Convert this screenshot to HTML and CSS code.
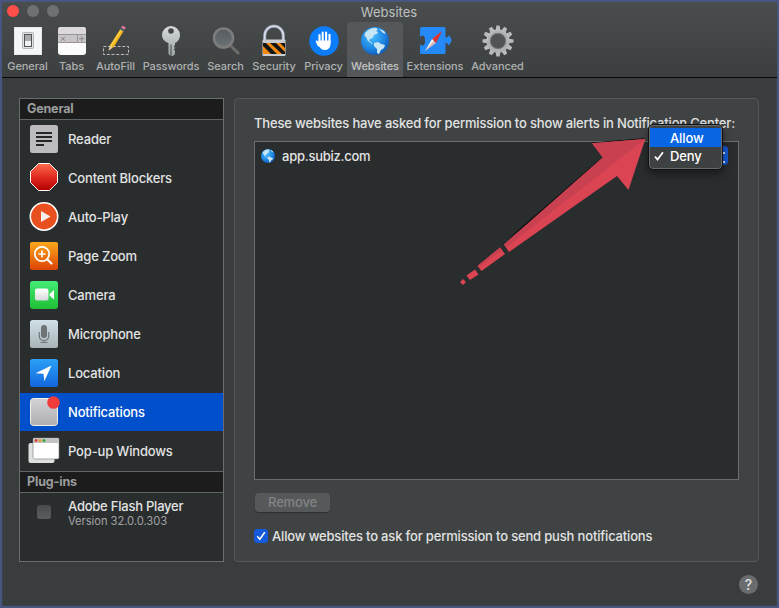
FILE: index.html
```html
<!DOCTYPE html>
<html lang="en">
<head>
<meta charset="utf-8">
<title>Websites</title>
<link rel="stylesheet" href="styles.css">
</head>
<body>
<svg class="defs" width="0" height="0" aria-hidden="true">
  <defs>
    <linearGradient id="silver" x2="0" y2="1"><stop stop-color="#d6dadc"/><stop offset="1" stop-color="#9da2a5"/></linearGradient>
    <linearGradient id="white" x2="0" y2="1"><stop stop-color="#fff"/><stop offset="1" stop-color="#d9dadb"/></linearGradient>
    <linearGradient id="blue" x2="0" y2="1"><stop stop-color="#2ca0f8"/><stop offset="1" stop-color="#1266dc"/></linearGradient>
    <linearGradient id="red" x2="0" y2="1"><stop stop-color="#ff6c50"/><stop offset=".5" stop-color="#e02c20"/><stop offset="1" stop-color="#b20000"/></linearGradient>
    <linearGradient id="orange" x2="0" y2="1"><stop stop-color="#fba91c"/><stop offset="1" stop-color="#dc4404"/></linearGradient>
    <linearGradient id="green" x2="0" y2="1"><stop stop-color="#43ec76"/><stop offset="1" stop-color="#1fbf35"/></linearGradient>
    <linearGradient id="mic" x2="0" y2="1"><stop stop-color="#cfe0e7"/><stop offset="1" stop-color="#a9b4b8"/></linearGradient>
    <linearGradient id="gray" x2="0" y2="1"><stop stop-color="#d4d4d6"/><stop offset="1" stop-color="#aeaeb0"/></linearGradient>
    <linearGradient id="lens" x2="0" y2="1"><stop stop-color="#555b5d"/><stop offset="1" stop-color="#6c7376"/></linearGradient>
    <radialGradient id="ocean" cx=".4" cy=".35" r=".75"><stop stop-color="#48bcff"/><stop offset=".6" stop-color="#1c84e0"/><stop offset="1" stop-color="#0b4ca8"/></radialGradient>
    <symbol id="globe" viewBox="0 0 28 28">
      <circle cx="14" cy="14" r="14" fill="url(#ocean)"/>
      <path fill="#c6e6f6" d="M6 4Q10 .6 15 .7L17 2.500 15 4 17 5 16 7 13 8 11.500 11 9 12 8 14 10 15 12 17 10.500 16.500 7 14 5 10 3.500 9 4 6ZM18 1.500 23 4 25 7 22 6 20 4ZM13 16 17 15 20 17 24 18 23 21 20 23 18 27 16 26 16 22 13 19Z"/>
    </symbol>
  </defs>
</svg>
<div class="window">
  <header class="header">
    <div class="titlebar">
      <div class="lights"><i class="light close"></i><i class="light"></i><i class="light"></i></div>
      <h1>Websites</h1>
    </div>
    <nav class="toolbar">
      <a class="tool general"><svg viewBox="0 0 30 30"><rect x="1" y="1" width="28" height="28" fill="#e6e8ea"/><rect x="2" y="2" width="26" height="26" fill="#f5f6f7"/><rect x="9.500" y="6.500" width="11" height="16" rx="1" fill="#e0e2e3" stroke="#b4b7b8"/><rect x="11.500" y="8.500" width="7" height="12" fill="#a8acae" stroke="#505456"/><path d="M12 15h6v5h-6z" fill="#f0f1f2"/></svg><span>General</span></a>
      <a class="tool tabs"><svg viewBox="0 0 30 30"><rect x="1" y="1" width="28" height="28" rx="3" fill="#fcfcfc"/><path d="M1 9V4a3 3 0 0 1 3-3h22a3 3 0 0 1 3 3v5z" fill="#dcd9dc"/><path d="M1 8.500h28v8H1z" fill="#c8c4c8"/><path d="M1 8.500h28M1 16.500h19.500v-8M20.500 16.500H29" fill="none" stroke="#989498"/><path d="m4 10.800 4 4m0-4-4 4M22 12.700h5.500m-2.700-2.700v5.500" stroke="#8b888e" stroke-width="1"/></svg><span>Tabs</span></a>
      <a class="tool autofill"><svg viewBox="0 0 30 30"><rect x="2.500" y="20.500" width="25" height="8" fill="none" stroke="#b9bcbd" stroke-dasharray="3 1.700"/><path d="m7 26 2-7 3 2z" fill="#e9c99a"/><path d="m7 26 .7-2.500 1.300.8z" fill="#333"/><path d="M8.800 19.500 19.500 2.800l3.300 2-10.500 17z" fill="#f8b81b"/><path d="m9.700 20.200 11-16.700" stroke="#ffe066" stroke-width="1"/><path d="m19 3.500 1.300-2 3.300 2-1.300 2z" fill="#4a6476"/><path d="m20.200 1.600 1.300-2 3.300 2-1.200 2z" fill="#e6739a"/></svg><span>AutoFill</span></a>
      <a class="tool passwords"><svg viewBox="0 0 30 30"><path fill="url(#silver)" fill-rule="evenodd" d="M15 0a9 9 0 0 1 9 9c0 4-2.300 7-5 8v2l-1.200 1.500L19 22l-1.200 1.600L19 25v3l-2 2h-1.500V18.500h-1V30l-2-2V17C8.500 15.500 6 13 6 9a9 9 0 0 1 9-9Zm0 2.200a2.800 2.800 0 1 0 0 5.600 2.800 2.800 0 0 0 0-5.600Z"/></svg><span>Passwords</span></a>
      <a class="tool search"><svg viewBox="0 0 30 30"><path d="m20 20 8 8" stroke="#6d6d6d" stroke-width="3"/><circle cx="12.500" cy="12" r="9.500" fill="url(#lens)" stroke="#7c7c7c" stroke-width="2.600"/></svg><span>Search</span></a>
      <a class="tool security"><svg viewBox="0 0 30 30"><path d="M5.700 14V9.500a9.300 9.300 0 0 1 18.600 0V14" fill="none" stroke="#8992a4" stroke-width="3.200"/><path d="M5.700 14V9.500a9.300 9.300 0 0 1 18.600 0V14" fill="none" stroke="#d5dbe9" stroke-width="1.800"/><rect x="3.500" y="13.500" width="23" height="16.500" rx="1" fill="#c9cdd2"/><path d="M4 17h22v11H4z" fill="#f58a12"/><path d="M4 17h3l11 11h-6L4 20zm7 0h6l9 9v2h-3zm10 0h5v5z" fill="#161616"/></svg><span>Security</span></a>
      <a class="tool privacy"><svg viewBox="0 0 30 30"><circle cx="15" cy="15" r="14.700" fill="#0b7dfb"/><path d="M10.500 17V9m3.200 7V6.500m3.400 9.500V6.500m3.400 10.500V8.800M9.800 19.500l-2-4" stroke="#fff" stroke-width="2.100" stroke-linecap="round"/><path d="M9.500 14.500h12V18c0 3.500-2.300 6-5.500 6-3 0-4.500-1.200-6.500-4.500z" fill="#fff"/></svg><span>Privacy</span></a>
      <a class="tool selected"><svg viewBox="0 0 30 30"><use href="#globe" x="1" y="1" width="28" height="28"/></svg><span>Websites</span></a>
      <a class="tool extensions"><svg class="wide" viewBox="0 0 32 30"><path d="M2.500 1H25q1.500 0 1.500 1.500V12q1-1 2-1 .3-1.500 1.300-1.500 1.200 0 1.200 1.700 1.500.3 1.500 3t-1.500 3q0 1.800-1.200 1.800-1 0-1.300-1.500-1 0-2-1v10q0 1.500-1.500 1.500H2.500Q1 28 1 26.500V18q1 1.500 2.500 1.500 2.500 0 2.500-5t-2.500-5Q2 9.500 1 11V2.500Q1 1 2.500 1Z" fill="#2589f8"/><path d="m23 5-6 12-4-4z" fill="#f1382e"/><path d="m6 25 7-12 4 4z" fill="#f6f6f6"/><path d="m6 25 17-20-6 12z" fill="#9e252a" opacity=".3"/></svg><span>Extensions</span></a>
      <a class="tool advanced"><svg class="wide" viewBox="-16 -15 32 30"><g fill="#b8babb"><path id="cog" d="M-1.600-15.500h3.200L2.600-10h-5.200zM-1.600 15.500h3.200L2.600 10h-5.200z"/><use href="#cog" transform="rotate(30)"/><use href="#cog" transform="rotate(60)"/><use href="#cog" transform="rotate(90)"/><use href="#cog" transform="rotate(120)"/><use href="#cog" transform="rotate(150)"/></g><circle r="9.500" fill="none" stroke="#aeb0b1" stroke-width="4"/><circle r="7.700" fill="#505455" stroke="#77797a"/><path d="M-11 0a11 11 0 0 1 22 0" fill="none" stroke="#c4c5c5"/></svg><span>Advanced</span></a>
    </nav>
  </header>
  <main class="content">
    <aside class="sidebar">
      <h2>General</h2>
      <ul>
        <li><svg viewBox="0 0 32 32"><rect x="2" y="2" width="28" height="28" rx="2.500" fill="#bcbcbe"/><path d="M8 10h16M8 14h16M8 18h16M8 22h8" stroke="#252727" stroke-width="2"/></svg><span>Reader</span></li>
        <li><svg viewBox="0 0 32 32"><path d="M10.500 1.500h11l8 8v11l-8 8h-11l-8-8v-11z" fill="url(#red)" stroke="#fff"/></svg><span>Content Blockers</span></li>
        <li><svg viewBox="0 0 32 32"><circle cx="16" cy="15.500" r="13.700" fill="#e9501f" stroke="#fff" stroke-width="1.600"/><path d="M13 10v11l9.500-5.500z" fill="#f4f1ef"/></svg><span>Auto-Play</span></li>
        <li><svg viewBox="0 0 32 32"><rect x="2" y="2" width="28" height="28" rx="2" fill="url(#orange)"/><circle cx="14" cy="14" r="7.200" fill="none" stroke="#fff" stroke-width="1.700"/><path d="M14 10.500v7M10.500 14h7" stroke="#fff" stroke-width="1.700"/><path d="m19.500 19.500 4 4" stroke="#fff" stroke-width="2.200" stroke-linecap="round"/></svg><span>Page Zoom</span></li>
        <li><svg viewBox="0 0 32 32"><rect x="2" y="2" width="28" height="28" rx="3" fill="url(#green)"/><rect x="7" y="9.500" width="13.500" height="12" rx="2" fill="url(#white)"/><path d="m21.500 15 4.500-4v9.500l-4.500-4z" fill="#fff"/></svg><span>Camera</span></li>
        <li><svg viewBox="0 0 32 32"><rect x="2" y="2" width="28" height="28" rx="2.500" fill="url(#mic)"/><rect x="13" y="7" width="6" height="13" rx="3" fill="#6f7476"/><path d="M11.300 14v4c0 6 9.400 6 9.400 0v-4M16 22.500V24m-3.500.5h7" fill="none" stroke="#73787b" stroke-width="1.200"/></svg><span>Microphone</span></li>
        <li><svg viewBox="0 0 32 32"><rect x="2" y="2" width="28" height="28" rx="2.500" fill="url(#blue)"/><path d="m23.500 8.500-16 7.800 8 .5.800 7.500z" fill="#fff"/></svg><span>Location</span></li>
        <li class="active"><svg viewBox="0 0 32 32"><rect x="2.500" y="2.500" width="27" height="27" rx="3" fill="url(#gray)" stroke="#f1efec"/><circle cx="25.500" cy="6.500" r="6.300" fill="#f13c3c"/></svg><span>Notifications</span></li>
        <li><svg viewBox="0 0 32 32"><rect x=".5" y="8" width="26" height="20" rx="2" fill="#dedfdf"/><rect x="5" y="3" width="26" height="21" rx="1.500" fill="#fff" stroke="#777" stroke-width=".6"/><path d="M5 8V4.500Q5 3 6.500 3h23Q31 3 31 4.500V8z" fill="#c3c4c4"/><circle cx="8" cy="5.500" r="1.500" fill="#dd443c"/><circle cx="12" cy="5.500" r="1.500" fill="#e4a032"/><circle cx="16" cy="5.500" r="1.500" fill="#3ba438"/></svg><span>Pop-up Windows</span></li>
      </ul>
      <h2 class="plug">Plug-ins</h2>
      <div class="plugin"><i class="box"></i><div><p>Adobe Flash Player</p><small>Version 32.0.0.303</small></div></div>
    </aside>
    <section class="panel">
      <p class="intro">These websites have asked for permission to show alerts in Notification Center:</p>
      <div class="list">
        <div class="site"><svg viewBox="0 0 28 28"><use href="#globe"/></svg><span>app.subiz.com</span></div>
        <div class="select"></div>
        <div class="menu">
          <div class="option highlighted"><i></i>Allow</div>
          <div class="option"><i><svg viewBox="0 0 10 10"><path d="m1 5.500 2.500 3L9 1.300" fill="none" stroke="#fff" stroke-width="1.800"/></svg></i>Deny</div>
        </div>
        <svg class="arrow" viewBox="455 130 200 165"><path fill="#111" d="m592 142.500 53-4.500-145 107 2.500-1.500 100-86.500z"/><path fill="#da4453" d="m592 143.300 53.300-4.300-16.800 51-11.500-14-108 76-5-7.500 98.800-87zM500 247.500l5 6.500-23.500 17-4-5zM475 269.500l3.500 5-8.500 5.500-3.500-4.500zM463 279l3 3-3 3-3-3z"/><path fill="#c94150" d="m592 143.300 53.300-4.300L506 247.500l-2-3 98.800-87zM500 247.500l2 2.500-23 17-1.500-1z"/></svg>
      </div>
      <button class="remove" disabled>Remove</button>
      <label class="permission"><span class="check"><svg viewBox="0 0 14 14"><path d="m3.300 7.300 2.500 3 5-7" fill="none" stroke="#fff" stroke-width="1.500"/></svg></span><span>Allow websites to ask for permission to send push notifications</span></label>
    </section>
  </main>
  <footer><button class="help">?</button></footer>
</div>
</body>
</html>
```
FILE: styles.css
```css
* { box-sizing: border-box; }
body {
  margin: 0;
  background: #47567f;
  color: #e2e3e3;
  font: 500 13px/16px Inter, "Liberation Sans", sans-serif;
  letter-spacing: -.17px;
}
h1, h2, p, ul { margin: 0; padding: 0; }
svg { display: block; overflow: visible; }
.defs { position: absolute; }
.window {
  width: 779px;
  height: 608px;
  overflow: hidden;
  border: 2px solid #47567f;
  background: #3a3d3e;
  box-shadow: inset 0 0 2px #44506a;
}
.header {
  height: 76px;
  border-bottom: 1px solid #050606;
  background: linear-gradient(#4a4d4e, #3c3f40);
}
.titlebar { display: grid; grid-template-columns: 80px 1fr 81px; height: 20px; }
.lights { display: flex; gap: 8px; padding: 3px 0 0 5px; }
.light { width: 12px; height: 12px; border-radius: 50%; background: #6e7071; }
.close { background: #ff4f4a; }
h1 { padding-top: 2px; text-align: center; font-size: 13px; font-weight: 400; line-height: 16px; color: #bec0c0; letter-spacing: 0; }
.toolbar { display: grid; grid-template-columns: 48px 41px 47px 64px 45px 52px 47px 56px 64px 61px; height: 55px; padding-left: 1px; }
.tool { display: flex; flex-direction: column; align-items: center; padding-top: 4px; color: #afb1b1; font-size: 11px; font-weight: 450; line-height: 14px; letter-spacing: -.08px; white-space: nowrap; }
.general { padding-left: 1px; }
.tool svg { width: 30px; height: 30px; margin-bottom: 3px; flex: none; }
.tool .wide { width: 32px; }
.selected { border-radius: 4px 4px 0 0; background: #55585a; color: #c3c5c5; }
.content { display: flex; gap: 10px; padding: 20px 0 0 17px; }
.sidebar { width: 205px; height: 464px; border: 1px solid #696d6e; background: #2a2d2e; }
.sidebar h2 { height: 21px; padding-left: 7px; border-bottom: 1px solid #626566; background: #1c1c1d; color: #9b9d9d; font-size: 12.500px; font-weight: 700; line-height: 20px; }
.sidebar .plug { height: 22px; border-top: 1px solid #626566; }
ul { list-style: none; }
li { display: flex; align-items: center; gap: 8px; height: 38px; margin-bottom: 1px; padding-left: 8px; }
li svg { width: 32px; height: 32px; flex: none; }
li.active { background: #004fcb; color: #fff; }
.plugin { display: flex; padding: 5px 0 0 17px; }
.box { width: 14px; height: 14px; margin: 7px 17px 0 0; border-radius: 3px; background: linear-gradient(#484a4b, #5b5d5e); }
.plugin p { letter-spacing: -.23px; }
.plugin small { display: block; color: #a0a2a3; font-size: 11.200px; font-weight: 400; line-height: 15px; letter-spacing: -.05px; }
.panel { width: 525px; height: 464px; padding: 16px 19px 0; border: 1px solid #555859; border-radius: 4px; background: #404344; }
.intro { height: 26px; white-space: nowrap; }
.list { position: relative; width: 485px; height: 339px; border: 1px solid #6b6e6f; background: #2a2d2e; }
.site { display: flex; align-items: center; gap: 7px; padding: 6px 0 0 6px; letter-spacing: -.25px; }
.site svg { width: 14px; height: 14px; }
.select { position: absolute; left: 395px; top: 4px; width: 78px; height: 19px; border-radius: 4px; background: #155ad5; }
.select::after { content: ""; position: absolute; right: 3px; top: 6px; width: 2px; height: 7px; border: solid #d9e6fb; border-width: 2px 0; }
.menu { position: absolute; left: 393px; top: -18px; width: 75px; height: 46px; padding: 3px 1px; overflow: hidden; border: 1px solid #101213; border-radius: 5px; background: #3e4142; box-shadow: inset 0 0 0 1px #66696b, 0 4px 9px #0007; color: #fff; letter-spacing: -.1px; }
.option { display: grid; grid-template-columns: 20px 1fr; align-items: center; height: 18px; }
.option svg { width: 10px; height: 10px; margin-left: 4px; }
.highlighted { height: 19px; background: #0866e4; }
.arrow { position: absolute; left: 200px; top: -12px; width: 200px; height: 165px; }
.remove { display: block; width: 75px; height: 19px; margin: 13px 0 0 1px; padding: 0; border: 0; border-radius: 4px; background: #56595a; box-shadow: 0 1px 1px #2d3030; color: #818485; font: 500 13px/19px Inter, sans-serif; letter-spacing: -.17px; }
.permission { display: flex; align-items: center; gap: 4px; margin-top: 16px; white-space: nowrap; }
.check { width: 14px; height: 14px; border-radius: 3px; background: #145adb; }
footer { display: flex; justify-content: flex-end; padding: 13px 19px 0; }
.help { width: 19px; height: 19px; padding: 0; border: 0; border-radius: 50%; background: #6a6d6e; color: #e1e2e2; font: 500 14px/19px Inter, sans-serif; }
```
